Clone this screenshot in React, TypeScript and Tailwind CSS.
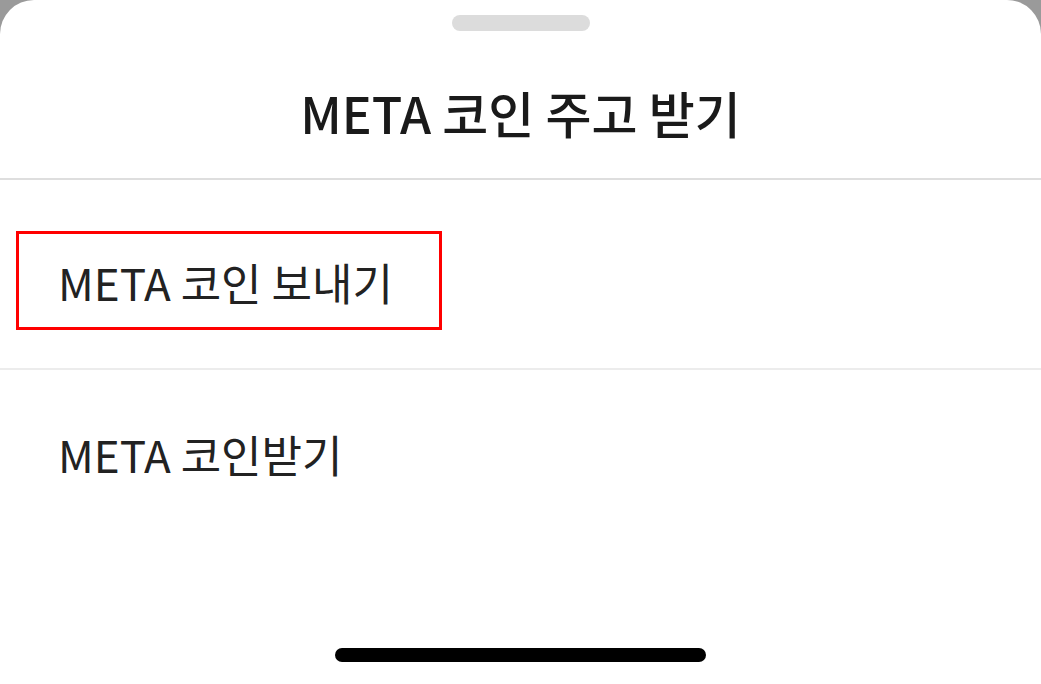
import React from "react";

export default function App() {
  return (
    <div className="w-[1041px] h-[684px] bg-[#9a9a9a] overflow-hidden" style={{ fontFamily: '"Noto Sans CJK KR", "Noto Sans", sans-serif' }}>
      <div className="relative w-full h-full bg-white rounded-t-[34px] flex flex-col">
        <div className="flex justify-center pt-[15px]">
          <div className="w-[138px] h-[16px] rounded-full bg-[#dcdcdc]" />
        </div>
        <div className="h-[147px] flex items-center justify-center pt-[14px]">
          <span className="text-[50px] font-medium text-[#1a1a1a] leading-none">META 코인 주고 받기</span>
        </div>
        <div className="h-[2px] bg-[#dedede]" />
        <div className="h-[188px] flex items-center pl-[58px] pt-[16px]">
          <span className="text-[44px] text-[#222] leading-none">META 코인 보내기</span>
        </div>
        <div className="h-[2px] bg-[#ececec]" />
        <div className="h-[168px] flex items-center pl-[58px]">
          <span className="text-[44px] text-[#222] leading-none">META 코인받기</span>
        </div>
        <div className="flex justify-center pt-[110px]">
          <div className="w-[371px] h-[14px] rounded-full bg-black" />
        </div>
        <div className="absolute left-[16px] top-[231px] w-[426px] h-[99px] border-[3px] border-[#ff0000]" />
      </div>
    </div>
  );
}
